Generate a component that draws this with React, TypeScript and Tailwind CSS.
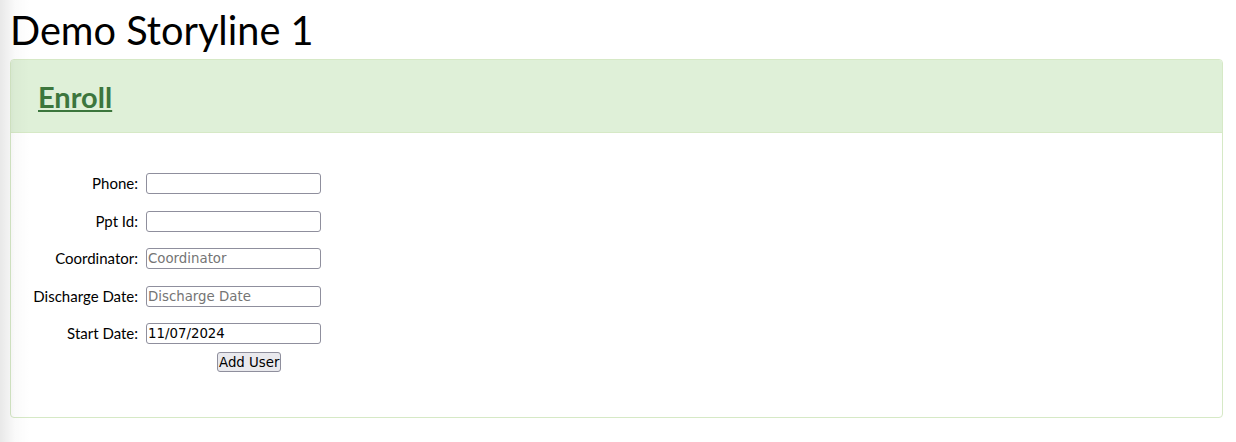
import React from "react";

const inputCls =
  "w-[175px] h-[21px] border border-[#8f8f9d] rounded-[3px] px-[1px] text-[13.33px] text-black placeholder:text-[#757575] bg-white outline-none";
const inputFont = { fontFamily: '"DejaVu Sans", sans-serif' };

function Label({ children }: { children: React.ReactNode }) {
  return <label className="text-right text-[15px] text-black leading-[21px] pr-[8px]">{children}</label>;
}

function Row({ label, placeholder, value }: { label: string; placeholder?: string; value?: string }) {
  return (
    <>
      <Label>{label}</Label>
      <input className={inputCls} style={inputFont} placeholder={placeholder} defaultValue={value} readOnly />
    </>
  );
}

export default function App() {
  return (
    <div
      className="relative min-h-[442px] bg-white text-black"
      style={{ fontFamily: 'Lato, "Liberation Sans", sans-serif' }}
    >
      <div className="pointer-events-none absolute left-0 top-0 h-full w-[30px] bg-gradient-to-r from-[rgba(0,0,0,0.09)] via-[rgba(0,0,0,0.02)] to-transparent" />
      <h1 className="pl-[10px] pt-[6px] text-[39.7px] leading-[48px] font-normal">Demo Storyline 1</h1>
      <div className="ml-[10px] mr-[13px] mt-[5px] border border-[#d6e9c6] rounded-[4px] bg-white">
        <div className="h-[73px] bg-[#dff0d8] border-b border-[#d6e9c6] rounded-t-[3px] pl-[27px] flex items-center">
          <a className="text-[29px] font-bold text-[#3c763d] underline leading-[36px] pt-[1px]" href="#">
            Enroll
          </a>
        </div>
        <div className="pt-[40px] pb-[45px] pl-[22px]">
          <div className="grid grid-cols-[113px_175px] gap-y-[16.5px] items-center">
            <Row label="Phone:" />
            <Row label="Ppt Id:" />
            <Row label="Coordinator:" placeholder="Coordinator" />
            <Row label="Discharge Date:" placeholder="Discharge Date" />
            <Row label="Start Date:" value="11/07/2024" />
          </div>
          <div className="flex pl-[184px] mt-[8px]">
            <button
              className="h-[20px] px-[1px] border border-[#8f8f9d] rounded-[3px] bg-[#e9e9ed] text-[13.33px] leading-[17px] text-black"
              style={inputFont}
            >
              Add User
            </button>
          </div>
        </div>
      </div>
    </div>
  );
}
